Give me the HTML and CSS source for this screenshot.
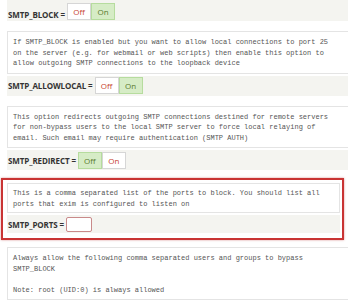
FILE: index.html
```html
<!DOCTYPE html>
<html>
<head>
<meta charset="utf-8">
<link rel="stylesheet" href="styles.css">
</head>
<body>
<div class="page">
  <div class="row first">
    <span class="label">SMTP_BLOCK =</span>
    <div class="toggle"><span class="btn">Off</span><span class="btn on">On</span></div>
  </div>
  <div class="desc">If SMTP_BLOCK is enabled but you want to allow local connections to port 25
on the server (e.g. for webmail or web scripts) then enable this option to
allow outgoing SMTP connections to the loopback device</div>
  <div class="row">
    <span class="label">SMTP_ALLOWLOCAL =</span>
    <div class="toggle"><span class="btn">Off</span><span class="btn on">On</span></div>
  </div>
  <div class="desc">This option redirects outgoing SMTP connections destined for remote servers
for non-bypass users to the local SMTP server to force local relaying of
email. Such email may require authentication (SMTP AUTH)</div>
  <div class="row">
    <span class="label">SMTP_REDIRECT =</span>
    <div class="toggle"><span class="btn on">Off</span><span class="btn">On</span></div>
  </div>
  <div class="highlight">
    <div class="desc short">This is a comma separated list of the ports to block. You should list all
ports that exim is configured to listen on</div>
    <div class="row">
      <span class="label">SMTP_PORTS =</span>
      <span class="input"></span>
    </div>
  </div>
  <div class="desc last">Always allow the following comma separated users and groups to bypass
SMTP_BLOCK

Note: root (UID:0) is always allowed</div>
</div>
</body>
</html>
```
FILE: styles.css
```css
html, body {
  margin: 0;
  padding: 0;
  background: #ffffff;
}
.page {
  width: 341px;
  padding-left: 7px;
  display: flex;
  flex-direction: column;
  overflow: hidden;
  height: 300px;
}
.row {
  display: flex;
  align-items: center;
  height: 20px;
  background: #f4f4f0;
  padding-left: 1px;
  margin-top: 2px;
  flex-shrink: 0;
}
.row.first {
  margin-top: 0;
  height: 21px;
  align-items: flex-end;
  padding-bottom: 1px;
  box-sizing: border-box;
}
.label {
  font-family: "Open Sans", "Liberation Sans", sans-serif;
  font-weight: 700;
  font-size: 8px;
  color: #333333;
  letter-spacing: -0.1px;
  margin-right: 2px;
}
.toggle {
  display: flex;
  height: 17px;
}
.btn {
  width: 24px;
  box-sizing: border-box;
  display: flex;
  align-items: center;
  justify-content: center;
  font-family: "Open Sans", "Liberation Sans", sans-serif;
  font-size: 8px;
  color: #c8432f;
  background: #ffffff;
  border: 1px solid #d6d6d6;
}
.btn.on {
  background: #d6ecc6;
  border-color: #b6dc9e;
  color: #5a7a2e;
}
.desc {
  margin-top: 11px;
  border: 1px solid #e4e4e4;
  background: #ffffff;
  padding: 5px 6px 4px 5px;
  font-family: "Liberation Mono", "Courier New", monospace;
  font-size: 7px;
  line-height: 10.5px;
  color: #555555;
  white-space: pre;
  flex-shrink: 0;
  margin-right: -6px;
}
.row + .desc {
  margin-top: 10px;
}
.highlight {
  margin-top: 8px;
  margin-left: -6px;
  margin-right: 4px;
  border: 2px solid #c93434;
  box-shadow: 0 0 2px rgba(180, 40, 40, 0.5);
  padding: 3px 2px 5px 4px;
  display: flex;
  flex-direction: column;
  flex-shrink: 0;
}
.desc.short {
  margin-top: 0;
  margin-right: 0;
  padding-bottom: 3px;
  padding-top: 4px;
}
.highlight .row {
  height: 18px;
}
.input {
  display: inline-block;
  width: 24px;
  height: 13px;
  border: 1px solid #c98a8a;
  border-radius: 2px;
  background: #ffffff;
}
.desc.last {
  margin-top: 7px;
}
```
